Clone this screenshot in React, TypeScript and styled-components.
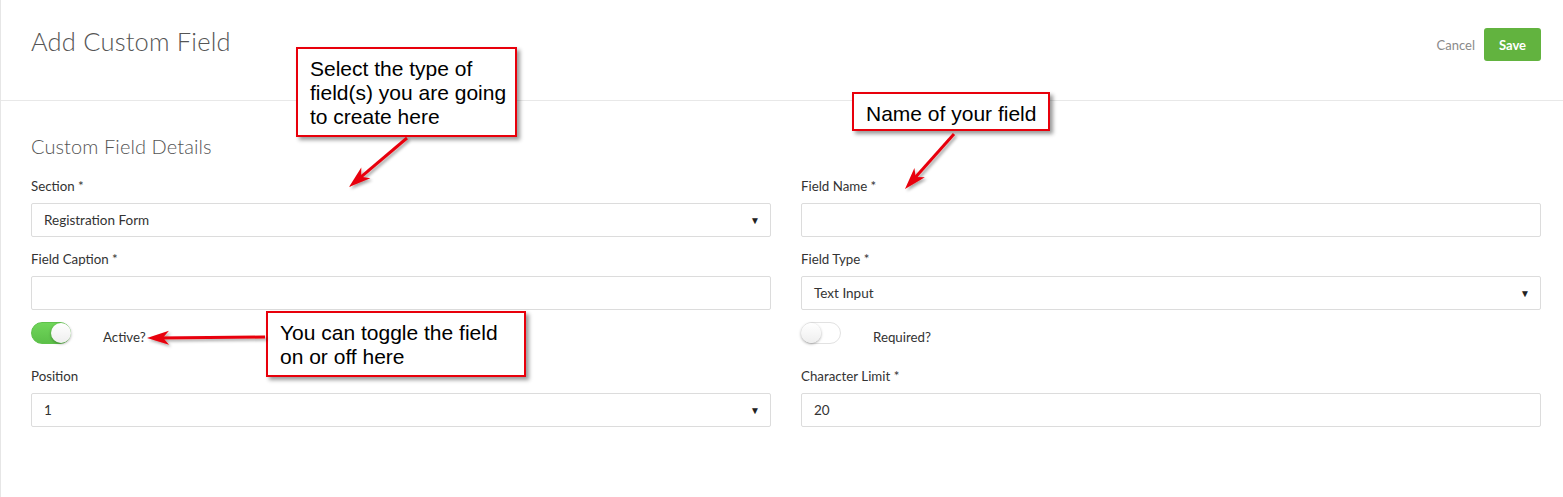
import React from 'react'
import styled, { createGlobalStyle } from 'styled-components'

const GlobalStyle = createGlobalStyle`
  body {
    margin: 0;
    background: #ffffff;
    font-family: Lato, "Open Sans", sans-serif;
    color: #333333;
  }
`

type Callout = {
  id: string
  left: number
  top: number
  width: number
  height: number
  lines: string[]
}

const callouts: Callout[] = [
  { id: 'section', left: 295, top: 47, width: 221, height: 90, lines: ['Select the type of', 'field(s) you are going', 'to create here'] },
  { id: 'name', left: 851, top: 92, width: 198, height: 39, lines: ['Name of your field'] },
  { id: 'toggle', left: 265, top: 311, width: 260, height: 66, lines: ['You can toggle the field', 'on or off here'] },
]

// arrows: [fromX, fromY, toX, toY]
const arrows = [
  [406, 138, 348, 187],
  [953, 134, 904, 189],
  [264, 337, 146, 338],
]

function Arrow({ x1, y1, x2, y2 }: { x1: number; y1: number; x2: number; y2: number }) {
  const dx = x2 - x1
  const dy = y2 - y1
  const len = Math.sqrt(dx * dx + dy * dy)
  const ux = dx / len
  const uy = dy / len
  const headLen = 22
  const headW = 7
  const bx = x2 - ux * headLen
  const by = y2 - uy * headLen
  const px = -uy
  const py = ux
  const head = `${x2},${y2} ${bx + px * headW},${by + py * headW} ${x2 - ux * (headLen - 6)},${y2 - uy * (headLen - 6)} ${bx - px * headW},${by - py * headW}`
  return (
    <g filter="url(#shadow)">
      <line x1={x1} y1={y1} x2={x2 - ux * 10} y2={y2 - uy * 10} stroke="#e8000b" strokeWidth={3} />
      <polygon points={head} fill="#e8000b" />
    </g>
  )
}

function Toggle({ on }: { on: boolean }) {
  return (
    <Track $on={on}>
      <Knob $on={on} />
    </Track>
  )
}

export default function App() {
  return (
    <>
      <GlobalStyle />
      <Page>
        <Header>
          <Title>Add Custom Field</Title>
          <Actions>
            <CancelLink>Cancel</CancelLink>
            <SaveButton>Save</SaveButton>
          </Actions>
        </Header>

        <Body>
          <SectionTitle>Custom Field Details</SectionTitle>
          <Columns>
            <Column>
              <Field>
                <Label>Section *</Label>
                <Box>
                  Registration Form
                  <Caret>▼</Caret>
                </Box>
              </Field>
              <Field>
                <Label>Field Caption *</Label>
                <Box />
              </Field>
              <ToggleRow>
                <Toggle on />
                <ToggleLabel>Active?</ToggleLabel>
              </ToggleRow>
              <Field>
                <Label>Position</Label>
                <Box>
                  1
                  <Caret>▼</Caret>
                </Box>
              </Field>
            </Column>

            <Column>
              <Field>
                <Label>Field Name *</Label>
                <Box />
              </Field>
              <Field>
                <Label>Field Type *</Label>
                <Box>
                  Text Input
                  <Caret>▼</Caret>
                </Box>
              </Field>
              <ToggleRow>
                <Toggle on={false} />
                <ToggleLabel>Required?</ToggleLabel>
              </ToggleRow>
              <Field>
                <Label>Character Limit *</Label>
                <Box>20</Box>
              </Field>
            </Column>
          </Columns>
        </Body>

        {callouts.map(c => (
          <Note key={c.id} style={{ left: c.left, top: c.top, width: c.width, height: c.height }}>
            {c.lines.map(l => (
              <div key={l}>{l}</div>
            ))}
          </Note>
        ))}

        <Overlay width="1563" height="497" viewBox="0 0 1563 497">
          <defs>
            <filter id="shadow" x="-20%" y="-20%" width="160%" height="160%">
              <feDropShadow dx="2" dy="2" stdDeviation="1.5" floodColor="#000" floodOpacity="0.35" />
            </filter>
          </defs>
          {arrows.map(([x1, y1, x2, y2], i) => (
            <Arrow key={i} x1={x1} y1={y1} x2={x2} y2={y2} />
          ))}
        </Overlay>
      </Page>
    </>
  )
}

const Page = styled.div`
  position: relative;
  min-height: 497px;
  border-left: 1px solid #e6e6e6;
  box-sizing: border-box;
  overflow: hidden;
`

const Header = styled.header`
  height: 101px;
  border-bottom: 1px solid #e8e8e8;
  box-sizing: border-box;
  display: flex;
  justify-content: space-between;
  align-items: flex-start;
  padding: 0 22px 0 30px;
`

const Title = styled.h1`
  margin: 24px 0 0;
  font-size: 25.5px;
  font-weight: 300;
  line-height: 34px;
  color: #555555;
  letter-spacing: 0.2px;
`

const Actions = styled.div`
  display: flex;
  align-items: center;
  gap: 9px;
  margin-top: 28px;
`

const CancelLink = styled.span`
  font-size: 13px;
  color: #8a8a8a;
`

const SaveButton = styled.button`
  width: 57px;
  height: 33px;
  border: none;
  border-radius: 3px;
  background: #62b33f;
  color: #ffffff;
  font-family: Lato, sans-serif;
  font-size: 13px;
  font-weight: 700;
`

const Body = styled.main`
  padding: 0 22px 0 30px;
`

const SectionTitle = styled.h2`
  margin: 33px 0 19px;
  font-size: 20px;
  font-weight: 300;
  line-height: 24px;
  color: #555555;
  letter-spacing: 0.1px;
`

const Columns = styled.div`
  display: grid;
  grid-template-columns: 1fr 1fr;
  column-gap: 30px;
`

const Column = styled.div`
  display: flex;
  flex-direction: column;
`

const Field = styled.div`
  display: flex;
  flex-direction: column;
  margin-bottom: 13px;
`

const Label = styled.label`
  font-size: 13.3px;
  line-height: 18px;
  color: #333333;
  margin-bottom: 8px;
`

const Box = styled.div`
  position: relative;
  height: 34px;
  box-sizing: border-box;
  border: 1px solid #dcdcdc;
  border-radius: 2px;
  padding: 0 12px;
  display: flex;
  align-items: center;
  font-size: 13.5px;
  color: #333333;
`

const Caret = styled.span`
  margin-left: auto;
  margin-right: -2px;
  font-size: 10px;
  color: #222222;
`

const ToggleRow = styled.div`
  display: flex;
  align-items: center;
  height: 24px;
  margin: -2px 0 22px;
`

const Track = styled.div<{ $on: boolean }>`
  position: relative;
  width: 40px;
  height: 22px;
  box-sizing: border-box;
  border-radius: 11px;
  background: ${p => (p.$on ? 'linear-gradient(#70d65a, #5cc049)' : '#ffffff')};
  border: 1px solid ${p => (p.$on ? '#5fc24b' : '#e2e2e2')};
`

const Knob = styled.div<{ $on: boolean }>`
  position: absolute;
  top: 0;
  left: ${p => (p.$on ? '19px' : '-1px')};
  width: 20px;
  height: 20px;
  border-radius: 50%;
  background: linear-gradient(#ffffff, #eeeeee);
  box-shadow: 0 1px 3px rgba(0, 0, 0, 0.35);
`

const ToggleLabel = styled.span`
  margin-left: 32px;
  margin-top: 8px;
  font-size: 13.3px;
  color: #333333;
`

const Note = styled.div`
  position: absolute;
  box-sizing: border-box;
  border: 2px solid #e8000b;
  background: #ffffff;
  box-shadow: 3px 3px 4px rgba(0, 0, 0, 0.4);
  padding: 8px 12px;
  font-family: "Liberation Sans", Arial, sans-serif;
  font-size: 21px;
  line-height: 24px;
  color: #000000;
  white-space: nowrap;
`

const Overlay = styled.svg`
  position: absolute;
  left: 0;
  top: 0;
  pointer-events: none;
`
